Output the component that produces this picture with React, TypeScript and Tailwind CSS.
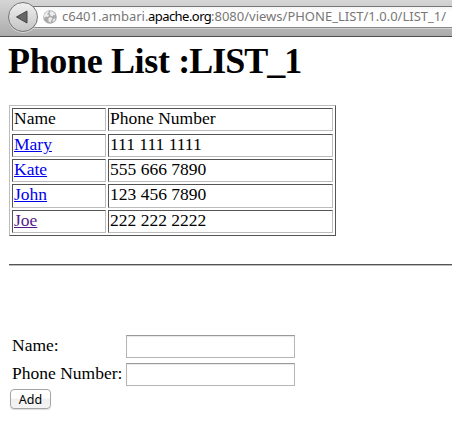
const rows = [
  { name: "Mary", phone: "111 111 1111", h: "h-[23px]", gap: "mt-[3px]", color: "text-[#0000ee]" },
  { name: "Kate", phone: "555 666 7890", h: "h-[23px]", gap: "mt-[2px]", color: "text-[#0000ee]" },
  { name: "John", phone: "123 456 7890", h: "h-[24px]", gap: "mt-[2px]", color: "text-[#0000ee]" },
  { name: "Joe", phone: "222 222 2222", h: "h-[23px]", gap: "mt-[2px]", color: "text-[#551a8b]" },
];

const cell =
  "border border-t-[#545454] border-l-[#545454] border-r-[#bdbdbd] border-b-[#bdbdbd] pl-px leading-[19px] whitespace-nowrap";
const field =
  "block h-[23px] w-[169px] border border-[#b5b5b5] border-t-[#999] bg-white shadow-[inset_0_1px_1px_#e8e8e8] outline-none";

function Toolbar() {
  return (
    <header className="flex h-[37px] border-b border-[#4c4c4c] bg-linear-to-b from-[#d6d6d6] to-[#ababab]">
      <div className="relative z-10 mt-[2px] ml-[8px] flex size-[30px] shrink-0 items-center justify-center rounded-full border border-[#777] bg-linear-to-b from-[#f0f0f0] to-[#c4c4c4] shadow-[0_1px_0_#d8d8d8]">
        <svg width="14" height="16" viewBox="0 0 14 16" className="mr-[2px]">
          <path d="M1.5 8 12 2v12Z" fill="#666" stroke="#444" strokeWidth="1" />
        </svg>
      </div>
      <div className="mt-[6px] -ml-[6px] flex h-[22px] flex-1 items-center border-y border-t-[#777] border-b-[#888] bg-linear-to-b from-[#f5f5f5] to-white to-25% pl-[11px] shadow-[0_1px_0_#d0d0d0]">
        <svg width="14" height="14" viewBox="0 0 14 14" className="shrink-0">
          <circle cx="7" cy="7" r="6.8" fill="#aaa" />
          <path d="M1 5 3 2l2-1 1 1-2 2 2 1-1 2-2-.5L1 8ZM7.500 1l3 1 2 3-2 0-1 1.500-2-1-1-2ZM5.500 8l2-1 2 1.500L8.500 10l-1 2.500-2-1ZM10 9.500l2.500-1.500-1 3-2 1Z" fill="#ececec" />
        </svg>
        <div className="-mt-[2px] ml-[5px] flex text-[13px] leading-[20px] whitespace-nowrap text-[#777] [font-family:'Noto_Sans','Open_Sans',sans-serif]">
          <span className="w-[86px]">c6401.ambari.</span>
          <span className="w-[63px] tracking-[-0.55px] text-black">apache.org</span>
          <span>:8080/views/PHONE_LIST/1.0.0/LIST_1/</span>
        </div>
      </div>
    </header>
  );
}

export default function App() {
  return (
    <div className="h-[428px] w-[452px] overflow-hidden bg-white text-[17.5px] text-black [font-family:'Liberation_Serif',serif]">
      <Toolbar />
      <main className="pl-[9px]">
        <h1 className="-ml-px h-[68px] pt-[4px] text-[36px] leading-[41px] font-bold whitespace-nowrap">
          <span className="tracking-[-0.35px]">Phone List </span>
          <span className="tracking-[-1px]">:LIST_1</span>
        </h1>
        <div className="h-[131px] w-[327px] border border-t-[#bdbdbd] border-r-[#545454] border-b-[#545454] border-l-[#bdbdbd] p-[2px]">
          <div className="flex h-[23px] gap-[2px]">
            <div className={`${cell} w-[94px]`}>Name</div>
            <div className={`${cell} w-[225px]`}>Phone Number</div>
          </div>
          {rows.map((r) => (
            <div key={r.name} className={`flex gap-[2px] ${r.h} ${r.gap}`}>
              <div className={`${cell} w-[94px]`}>
                <a href="#" className={`underline ${r.color}`}>{r.name}</a>
              </div>
              <div className={`${cell} w-[225px]`}>{r.phone}</div>
            </div>
          ))}
        </div>
        <hr className="mt-[28px] h-[2px] border-t border-b border-t-[#545454] border-b-[#bdbdbd]" />
        <form className="mt-[69px]">
          <label className="flex h-[28px]">
            <span className="w-[117px] pl-[3px] leading-[20px] whitespace-nowrap">Name:</span>
            <input className={field} />
          </label>
          <label className="flex h-[26px]">
            <span className="w-[117px] pl-[3px] leading-[20px] whitespace-nowrap">Phone Number:</span>
            <input className={field} />
          </label>
          <button
            type="button"
            className="ml-px block h-[20px] w-[41px] rounded-[4px] border border-[#a5a5a5] bg-linear-to-b from-white from-45% via-[#f0f0f0] via-50% to-[#f4f4f4] text-center text-[12.5px] leading-[17px] shadow-[0_1px_1px_#ddd] [font-family:'Noto_Sans','Open_Sans',sans-serif]"
          >
            Add
          </button>
        </form>
      </main>
    </div>
  );
}
